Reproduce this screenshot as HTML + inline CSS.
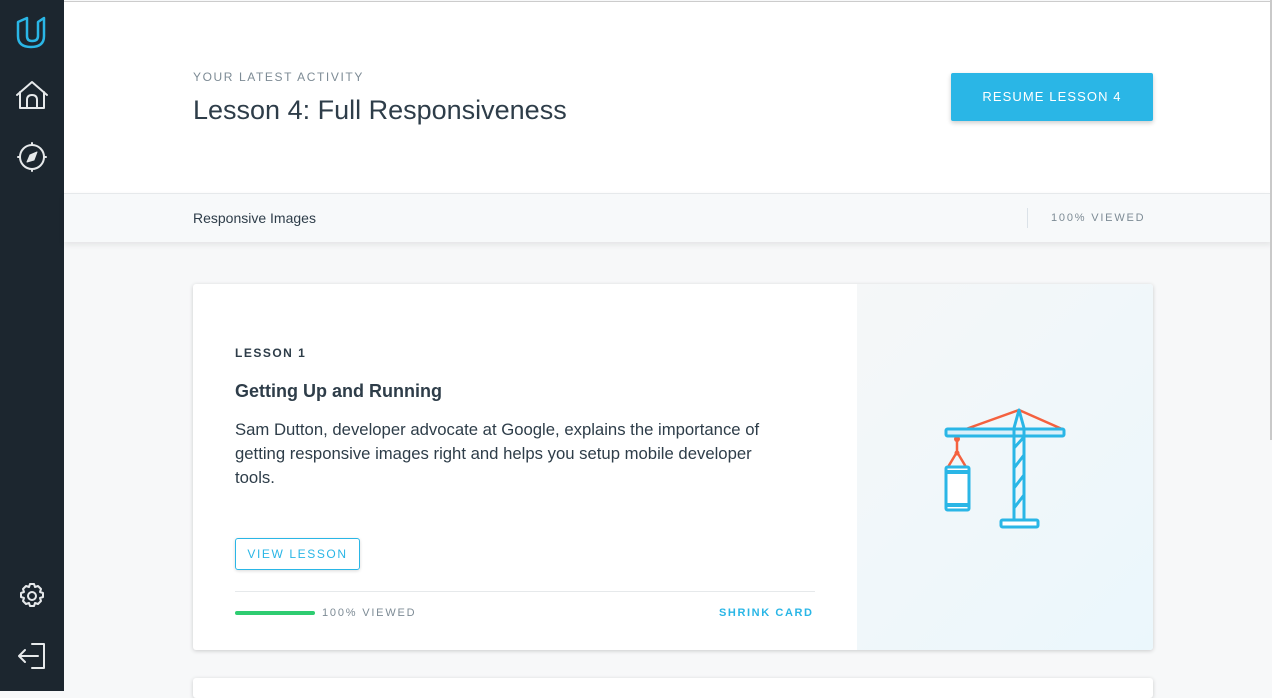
<!DOCTYPE html><html><head><style>
body{margin:0;width:1272px;height:691px;overflow:hidden;background:#f7f8f9;font-family:"Liberation Sans",sans-serif;position:relative}
.sb{position:absolute;left:0;top:0;width:64px;height:691px;background:#1c262f}
.hd{position:absolute;left:64px;top:1px;right:0;height:192px;background:#fff;border-top:1px solid #ccc}
.sub{position:absolute;left:64px;top:193px;right:0;height:48px;background:#f7f9fa;border-top:1px solid #e6e9eb;box-shadow:0 3px 6px rgba(0,0,0,.08)}
.t{position:absolute;white-space:nowrap}
.card{position:absolute;left:193px;top:284px;width:960px;height:366px;background:#fff;box-shadow:0 1px 4px rgba(0,0,0,.18);border-radius:3px;overflow:hidden}
.img{position:absolute;left:664px;top:0;width:296px;height:366px;background:linear-gradient(135deg,#f5f7f8,#ebf7fc)}
</style></head><body>
<div class="sb">
<svg width="64" height="691" fill="none" stroke-linecap="round" stroke-linejoin="round">
<path d="M18 22 V36 Q18 47 31 47 Q44 47 44 36 V18 L38 22 V36 Q38 41 32 41 Q27 41 27 36 V18 Z" stroke="#2ab6e6" stroke-width="2.5"/>
<path d="M17 95 L32 82 L47 95 M20 92 V108 H44 V92 M27 108 V100 Q27 95 32 95 Q37 95 37 100 V108" stroke="#e6e9eb" stroke-width="2"/>
<circle cx="32" cy="157" r="12" stroke="#e6e9eb" stroke-width="2"/>
<path d="M32 143v2M32 169v2M18 157h2M44 157h2" stroke="#e6e9eb" stroke-width="2"/>
<path d="M37 152 L34 160 L27 162 L30 155 Z" fill="#e6e9eb" stroke="#e6e9eb" stroke-width="1"/>
<circle cx="32" cy="596" r="4" stroke="#e6e9eb" stroke-width="2"/>
<path d="M30 584h4l1 3 3-1 3 3-1 3 3 1v4l-3 1 1 3-3 3-3-1-1 3h-4l-1-3-3 1-3-3 1-3-3-1v-4l3-1-1-3 3-3 3 1z" stroke="#e6e9eb" stroke-width="2"/>
<path d="M32 644 H44 V668 H32 M38 656 H19 M25 650 L19 656 L25 662" stroke="#e6e9eb" stroke-width="2"/>
</svg></div>
<div class="hd"></div>
<div class="t" style="left:193px;top:70px;font-size:12px;letter-spacing:1.6px;color:#7d8b95">YOUR LATEST ACTIVITY</div>
<div class="t" style="left:193px;top:95px;font-size:27px;color:#2e3d49;font-weight:300">Lesson 4: Full Responsiveness</div>
<div class="t" style="left:951px;top:73px;width:202px;height:48px;background:#2ab6e6;color:#fff;font-size:13px;letter-spacing:1.1px;text-align:center;line-height:48px;border-radius:2px;box-shadow:0 2px 5px rgba(0,0,0,.2)">RESUME LESSON 4</div>
<div class="sub"></div>
<div class="t" style="left:193px;top:210px;font-size:14px;color:#2e3d49">Responsive Images</div>
<div class="t" style="left:1027px;top:208px;width:1px;height:20px;background:#dbe2e8"></div>
<div class="t" style="left:1051px;top:212px;font-size:11px;letter-spacing:1.8px;color:#7d8b95">100% VIEWED</div>
<div class="card">
<div class="t" style="left:42px;top:62px;font-size:12px;letter-spacing:1.5px;color:#2e3d49;font-weight:bold">LESSON 1</div>
<div class="t" style="left:42px;top:97px;font-size:18px;color:#2e3d49;font-weight:bold">Getting Up and Running</div>
<div class="t" style="left:42px;top:134px;font-size:16.7px;line-height:24px;color:#2e3d49;white-space:normal;width:545px">Sam Dutton, developer advocate at Google, explains the importance of getting responsive images right and helps you setup mobile developer tools.</div>
<div class="t" style="left:42px;top:254px;width:123px;height:30px;border:1px solid #2ab6e6;border-radius:3px;color:#2ab6e6;font-size:12px;letter-spacing:1.6px;text-align:center;line-height:30px;box-shadow:0 1px 3px rgba(0,0,0,.15)">VIEW LESSON</div>
<div class="t" style="left:42px;top:307px;width:580px;height:1px;background:#e6e9eb"></div>
<div class="t" style="left:42px;top:327px;width:80px;height:4px;background:#2ecc71;border-radius:2px"></div>
<div class="t" style="left:129px;top:323px;font-size:11px;letter-spacing:1.8px;color:#7d8b95">100% VIEWED</div>
<div class="t" style="left:526px;top:323px;font-size:11px;letter-spacing:1.6px;color:#2ab6e6;font-weight:bold">SHRINK CARD</div>
<div class="img"></div>
</div>
<svg class="t" style="left:0;top:0" width="1272" height="691" fill="none" stroke-linejoin="round">
<path d="M966 429 L1019 410 L1062 429" stroke="#f4613f" stroke-width="2.5"/>
<path d="M957 437 V452 M957 452 L948 467 M957 452 L966 467" stroke="#f4613f" stroke-width="2.5"/>
<circle cx="957" cy="439" r="3" fill="#f4613f"/><circle cx="957" cy="453" r="2.5" fill="#f4613f"/>
<rect x="946" y="429" width="118" height="7" rx="1.5" fill="#d9f0fa" stroke="#2ab6e6" stroke-width="3"/>
<path d="M1014 520 V428 L1019 410 L1024 428 V520 M1014 448 L1024 437 M1014 468 L1024 455 M1014 488 L1024 475 M1014 508 L1024 495" stroke="#2ab6e6" stroke-width="3"/>
<rect x="1001" y="520" width="37" height="7" rx="1.5" fill="#fff" stroke="#2ab6e6" stroke-width="3"/>
<rect x="946" y="467" width="23" height="43" rx="1.5" fill="#fff" stroke="#2ab6e6" stroke-width="3"/>
<path d="M946 472 H969 M946 505 H969" stroke="#2ab6e6" stroke-width="4"/>
</svg>
<div class="t" style="left:193px;top:678px;width:960px;height:20px;background:#fff;box-shadow:0 1px 4px rgba(0,0,0,.18);border-radius:3px"></div>
<div class="t" style="left:1270px;top:0;width:2px;height:440px;background:#c9c9c9"></div>
</body></html>
